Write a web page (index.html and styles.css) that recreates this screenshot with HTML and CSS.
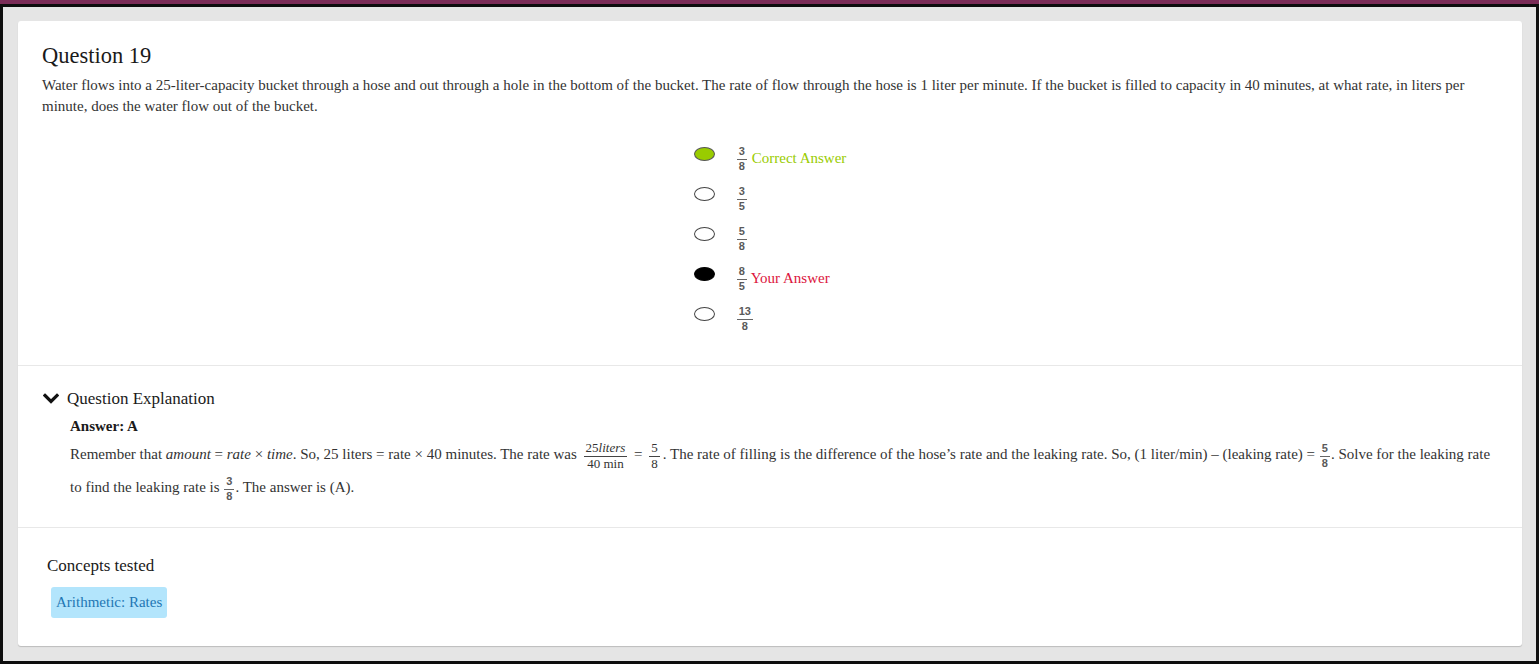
FILE: index.html
```html
<!DOCTYPE html>
<html>
<head>
<meta charset="utf-8">
<link rel="stylesheet" href="styles.css">
</head>
<body>
<div class="topbar"></div>
<div class="frame">
  <div class="card">
    <section class="question">
      <h2 class="q-title">Question 19</h2>
      <p class="q-text">Water flows into a 25-liter-capacity bucket through a hose and out through a hole in the bottom of the bucket. The rate of flow through the hose is 1 liter per minute. If the bucket is filled to capacity in 40 minutes, at what rate, in liters per minute, does the water flow out of the bucket.</p>
      <div class="options">
        <div class="opt">
          <span class="radio radio-correct"></span>
          <span class="frac"><span class="num">3</span><span class="den">8</span></span>
          <span class="tag-correct">Correct Answer</span>
        </div>
        <div class="opt">
          <span class="radio"></span>
          <span class="frac"><span class="num">3</span><span class="den">5</span></span>
        </div>
        <div class="opt">
          <span class="radio"></span>
          <span class="frac"><span class="num">5</span><span class="den">8</span></span>
        </div>
        <div class="opt">
          <span class="radio radio-chosen"></span>
          <span class="frac"><span class="num">8</span><span class="den">5</span></span>
          <span class="tag-yours">Your Answer</span>
        </div>
        <div class="opt">
          <span class="radio"></span>
          <span class="frac"><span class="num">13</span><span class="den">8</span></span>
        </div>
      </div>
    </section>
    <section class="explanation">
      <div class="exp-head">
        <svg class="chev" width="16" height="12" viewBox="0 0 16 12"><polyline points="2,2.5 8,8.5 14,2.5" fill="none" stroke="#111" stroke-width="3.2" stroke-linecap="square"/></svg>
        <span>Question Explanation</span>
      </div>
      <div class="exp-body">
        <div class="answer">Answer: A</div>
        <p class="exp-text">Remember that <i>amount</i> = <i>rate</i> × <i>time</i>. So, 25 liters = rate × 40 minutes. The rate was <span class="mfrac"><span class="mnum">25<i>liters</i></span><span class="mden">40 min</span></span> = <span class="mfrac"><span class="mnum">5</span><span class="mden">8</span></span>. The rate of filling is the difference of the hose’s rate and the leaking rate. So, (1 liter/min) – (leaking rate) = <span class="frac sm"><span class="num">5</span><span class="den">8</span></span>. Solve for the leaking rate to find the leaking rate is <span class="frac sm"><span class="num">3</span><span class="den">8</span></span>. The answer is (A).</p>
      </div>
    </section>
    <section class="concepts">
      <div class="c-title">Concepts tested</div>
      <span class="chip">Arithmetic: Rates</span>
    </section>
  </div>
</div>
</body>
</html>
```

FILE: styles.css
```css
* { box-sizing: border-box; }
html, body {
  margin: 0;
  padding: 0;
  height: 664px;
  overflow: hidden;
  background: #1a1a1a;
}
body {
  font-family: "Liberation Serif", "Times New Roman", serif;
  color: #333;
}
.topbar {
  height: 4px;
  background: #7a2c57;
}
.frame {
  height: 660px;
  border: 3px solid #0d0d0d;
  border-right-color: #111;
  background: #e5e5e5;
  padding: 14px 14px 0 15px;
}
.card {
  background: #fff;
  border-radius: 3px;
  box-shadow: 0 1px 1px rgba(0,0,0,0.18);
  height: 625px;
}
.question {
  padding: 22px 24px 27px 24px;
  border-bottom: 1px solid #e8e8e8;
}
.q-title {
  margin: 0 0 6px 0;
  font-weight: normal;
  font-size: 22.5px;
  line-height: 26px;
  color: #1a1a1a;
}
.q-text {
  margin: 0;
  font-size: 15px;
  line-height: 21px;
  color: #333;
}
.options {
  width: fit-content;
  margin: 21px auto 0 auto;
  display: flex;
  flex-direction: column;
}
.opt {
  height: 40px;
  display: flex;
  align-items: center;
}
.radio {
  width: 21px;
  height: 14px;
  border: 1px solid #444;
  border-radius: 50%;
  background: #fff;
  margin-right: 22px;
  margin-bottom: 8px;
}
.radio-correct {
  background: #99cc00;
  border-color: #555;
}
.radio-chosen {
  background: #000;
  border-color: #000;
}
.frac {
  display: inline-flex;
  flex-direction: column;
  align-items: center;
  font-family: "Liberation Sans", Arial, sans-serif;
  font-weight: bold;
  font-size: 11px;
  color: #5a5a5a;
  line-height: 12px;
  vertical-align: middle;
}
.frac .num {
  padding: 0 2px 2px 2px;
  border-bottom: 1px solid #666;
}
.frac .den {
  padding: 0 2px;
}
.tag-correct {
  margin-left: 5px;
  font-size: 15px;
  color: #99cc00;
}
.tag-yours {
  margin-left: 4px;
  font-size: 15px;
  color: #dc143c;
}
.explanation {
  padding: 23px 24px 23px 24px;
  border-bottom: 1px solid #e8e8e8;
}
.exp-head {
  display: flex;
  align-items: center;
  font-size: 17px;
  line-height: 20px;
  color: #1a1a1a;
}
.chev {
  margin-left: 1px;
  margin-right: 8px;
}
.exp-body {
  padding-left: 28px;
  margin-top: 7px;
}
.answer {
  font-weight: bold;
  font-size: 15px;
  line-height: 20px;
  color: #1a1a1a;
}
.exp-text {
  margin: 2px 0 0 0;
  font-size: 15px;
  line-height: 33px;
  color: #333;
}
.mfrac {
  display: inline-flex;
  flex-direction: column;
  align-items: center;
  vertical-align: middle;
  font-size: 13px;
  line-height: 12px;
  color: #333;
  margin: 0 3px;
}
.mfrac .mnum {
  padding: 0 2px 2px 2px;
  border-bottom: 1px solid #444;
}
.mfrac .mden {
  padding: 1px 2px 0 2px;
}
.frac.sm {
  margin: 0 1px;
}
.concepts {
  padding: 28px 29px 28px 29px;
}
.c-title {
  font-size: 17px;
  line-height: 20px;
  color: #1a1a1a;
}
.chip {
  display: inline-block;
  margin: 11px 0 0 4px;
  padding: 0 5px;
  height: 31px;
  line-height: 31px;
  font-size: 15px;
  background: #b3e5fc;
  color: #1f77b4;
  border-radius: 3px;
}
```
